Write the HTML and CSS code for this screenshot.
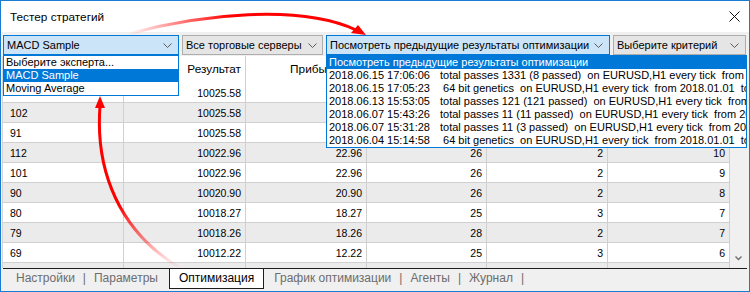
FILE: index.html
```html
<!DOCTYPE html>
<html lang="ru">
<head>
    <meta charset="UTF-8">
    <title>Тестер стратегий</title>
    <link rel="stylesheet" href="styles.css">
</head>
<body>
<div class="window">
    <div class="titlebar">
        <span class="title">Тестер стратегий</span>
        <svg class="close" width="11" height="11" viewBox="0 0 11 11">
            <path d="M0.5 0.5 L10.5 10.5 M10.5 0.5 L0.5 10.5" stroke="#111" stroke-width="1" fill="none"/>
        </svg>
    </div>

    <div class="toolbar">
        <div class="combo active expert">
            <span>MACD Sample</span>
            <svg class="chevron" width="9" height="5" viewBox="0 0 9 5"><path d="M0.5 0.5 L4.5 4.5 L8.5 0.5" stroke="#5a5a5a" fill="none"/></svg>
        </div>
        <div class="combo servers">
            <span>Все торговые серверы</span>
            <svg class="chevron" width="9" height="5" viewBox="0 0 9 5"><path d="M0.5 0.5 L4.5 4.5 L8.5 0.5" stroke="#5a5a5a" fill="none"/></svg>
        </div>
        <div class="combo active history">
            <span>Посмотреть предыдущие результаты оптимизации</span>
            <svg class="chevron" width="9" height="5" viewBox="0 0 9 5"><path d="M0.5 0.5 L4.5 4.5 L8.5 0.5" stroke="#5a5a5a" fill="none"/></svg>
        </div>
        <div class="combo criteria">
            <span>Выберите критерий</span>
            <svg class="chevron" width="9" height="5" viewBox="0 0 9 5"><path d="M0.5 0.5 L4.5 4.5 L8.5 0.5" stroke="#5a5a5a" fill="none"/></svg>
        </div>
    </div>

    <div class="results">
        <div class="grid">
            <!-- cells hidden behind the open lists are left empty -->
            <div class="row header">
                <div class="cell"></div>
                <div class="cell">Результат</div>
                <div class="cell profit">Прибыль</div>
                <div class="cell"></div>
                <div class="cell"></div>
                <div class="cell"></div>
            </div>
            <div class="row">
                <div class="cell"></div><div class="cell">10025.58</div><div class="cell"></div><div class="cell"></div><div class="cell"></div><div class="cell"></div>
            </div>
            <div class="row odd">
                <div class="cell">102</div><div class="cell">10025.58</div><div class="cell"></div><div class="cell"></div><div class="cell"></div><div class="cell"></div>
            </div>
            <div class="row">
                <div class="cell">91</div><div class="cell">10025.58</div><div class="cell"></div><div class="cell"></div><div class="cell"></div><div class="cell"></div>
            </div>
            <div class="row odd">
                <div class="cell">112</div><div class="cell">10022.96</div><div class="cell">22.96</div><div class="cell">26</div><div class="cell">2</div><div class="cell">10</div>
            </div>
            <div class="row">
                <div class="cell">101</div><div class="cell">10022.96</div><div class="cell">22.96</div><div class="cell">26</div><div class="cell">2</div><div class="cell">9</div>
            </div>
            <div class="row odd">
                <div class="cell">90</div><div class="cell">10020.90</div><div class="cell">20.90</div><div class="cell">26</div><div class="cell">2</div><div class="cell">8</div>
            </div>
            <div class="row">
                <div class="cell">80</div><div class="cell">10018.27</div><div class="cell">18.27</div><div class="cell">25</div><div class="cell">3</div><div class="cell">7</div>
            </div>
            <div class="row odd">
                <div class="cell">79</div><div class="cell">10018.26</div><div class="cell">18.26</div><div class="cell">28</div><div class="cell">2</div><div class="cell">7</div>
            </div>
            <div class="row">
                <div class="cell">69</div><div class="cell">10012.22</div><div class="cell">12.22</div><div class="cell">25</div><div class="cell">3</div><div class="cell">6</div>
            </div>
            <div class="row odd">
                <div class="cell"></div><div class="cell"></div><div class="cell"></div><div class="cell"></div><div class="cell"></div><div class="cell"></div>
            </div>
        </div>
        <div class="scrollbar">
            <svg width="7" height="5" viewBox="0 0 7 5"><path d="M0.5 0.5 L3.5 3.5 L6.5 0.5" stroke="#707070" stroke-width="1.4" fill="none"/></svg>
        </div>
    </div>

    <div class="tabs">
        <span class="tab">Настройки</span><span class="sep">|</span>
        <span class="tab">Параметры</span>
        <span class="tab current">Оптимизация</span>
        <span class="tab">График оптимизации</span><span class="sep">|</span>
        <span class="tab">Агенты</span><span class="sep">|</span>
        <span class="tab">Журнал</span><span class="sep">|</span>
    </div>

    <!-- open lists -->
    <ul class="dropdown experts-list">
        <li>Выберите эксперта...</li>
        <li class="selected">MACD Sample</li>
        <li>Moving Average</li>
    </ul>

    <ul class="dropdown history-list">
        <li class="selected">Посмотреть предыдущие результаты оптимизации</li>
        <li><span class="date">2018.06.15 17:06:06</span>total passes 1331 (8 passed)  on EURUSD,H1 every tick  from 2018.01.01  to 2018.06.01</li>
        <li><span class="date">2018.06.15 17:05:23</span> 64 bit genetics  on EURUSD,H1 every tick  from 2018.01.01  to 2018.06.01</li>
        <li><span class="date">2018.06.13 15:53:05</span>total passes 121 (121 passed)  on EURUSD,H1 every tick  from 2018.01.01  to 2018.06.01</li>
        <li><span class="date">2018.06.07 15:43:26</span>total passes 11 (11 passed)  on EURUSD,H1 every tick  from 2018.01.01  to 2018.06.01</li>
        <li><span class="date">2018.06.07 15:31:28</span>total passes 11 (3 passed)  on EURUSD,H1 every tick  from 2018.01.01  to 2018.06.01</li>
        <li><span class="date">2018.06.04 15:14:58</span> 64 bit genetics  on EURUSD,H1 every tick  from 2018.01.01  to 2018.06.01</li>
    </ul>

    <!-- red pointer arrows drawn over the window -->
    <svg class="arrows" width="750" height="292" viewBox="0 0 750 292">
        <defs>
            <linearGradient id="fadeTop" gradientUnits="userSpaceOnUse" x1="128" y1="0" x2="230" y2="0">
                <stop offset="0" stop-color="#ff0000" stop-opacity="0"/>
                <stop offset="1" stop-color="#ff0000" stop-opacity="1"/>
            </linearGradient>
            <linearGradient id="fadeBottom" gradientUnits="userSpaceOnUse" x1="0" y1="268" x2="0" y2="205">
                <stop offset="0" stop-color="#ff0000" stop-opacity="0"/>
                <stop offset="1" stop-color="#ff0000" stop-opacity="1"/>
            </linearGradient>
        </defs>
        <path d="M128 34 C200 14, 300 4, 356 30" stroke="url(#fadeTop)" stroke-width="3" fill="none"/>
        <path d="M366 35 L351 33 L358 25 Z" fill="#ff0000"/>
        <path d="M180 268 C120 232, 95 172, 100 106" stroke="url(#fadeBottom)" stroke-width="3" fill="none"/>
        <path d="M100 96 L95 108 L105 108 Z" fill="#ff0000"/>
    </svg>
</div>
</body>
</html>
```

FILE: styles.css
```css
* {
    box-sizing: border-box;
}

body {
    margin: 0;
    font-family: "Liberation Sans", Arial, sans-serif;
    font-size: 10.5px;
    color: #000;
}

.window {
    position: relative;
    width: 750px;
    height: 292px;
    border: 1px solid #1b7bd0;
    background-color: #f0f0f0;
    display: flex;
    flex-direction: column;
    overflow: hidden;
}

.titlebar {
    flex: none;
    height: 31px;
    background-color: #fff;
    display: flex;
    align-items: center;
    justify-content: space-between;
    padding: 0 9px 0 9px;
}

.title {
    font-size: 11.8px;
}

/* combo boxes row */
.toolbar {
    flex: none;
    display: flex;
    gap: 3px;
    padding: 3px 0 1px 2px;
    font-size: 11px;
}

.combo {
    height: 20px;
    display: flex;
    align-items: center;
    justify-content: space-between;
    padding: 0 6px 0 3px;
    background-color: #e5e5e5;
    border: 1px solid #adadad;
    white-space: nowrap;
}

.combo.active {
    background-color: #cce4f7;
    border-color: #0078d7;
}

.combo.expert { width: 176px; }
.combo.servers { width: 141px; padding-right: 5px; }
.combo.history { width: 284px; }
.combo.criteria { width: 133px; }

/* results table */
.results {
    flex: none;
    height: 212px;
    display: flex;
    padding-left: 1px;
}

.grid {
    width: 728px;
    height: 212px;
    overflow: hidden;
    border-left: 1px solid #d4d4d4;
    background-color: #fff;
}

.row {
    display: grid;
    grid-template-columns: 121px 122px 121px 120px 121px 122px;
    height: 20px;
}

.row.odd {
    background-color: #ebebeb;
}

.row .cell {
    border-right: 1px solid #d0d0d0;
    border-bottom: 1px solid #d0d0d0;
    text-align: right;
    padding: 0 4px;
    line-height: 20px;
    white-space: nowrap;
    overflow: hidden;
}

.row .cell:first-child {
    text-align: left;
    padding-left: 7px;
}

.row.header {
    height: 27px;
    font-size: 11.8px;
}

.row.header .cell {
    border-bottom: none;
    line-height: 27px;
}

.row.header .profit {
    padding-right: 26px;
}

.scrollbar {
    width: 17px;
    height: 212px;
    background-color: #f0f0f0;
    display: flex;
    align-items: flex-end;
    justify-content: center;
    padding-bottom: 7px;
}

/* bottom tabs */
.tabs {
    flex: none;
    height: 23px;
    margin: 0 2px;
    border-top: 1px solid #1e1e1e;
    display: flex;
    align-items: flex-start;
    padding-left: 13px;
    color: #6d6d6d;
    font-size: 12px;
}

.tab {
    line-height: 19px;
    white-space: nowrap;
}

.sep {
    line-height: 19px;
    margin: 0 8px;
}

.tab.current {
    color: #000;
    background-color: #fff;
    border: 1px solid #1e1e1e;
    border-top: none;
    height: 20px;
    margin: 0 10px 0 11px;
    padding: 0 9px;
}

/* open drop-down lists */
.dropdown {
    position: absolute;
    top: 54px;
    margin: 0;
    padding: 0;
    list-style: none;
    background-color: #fff;
    border: 1px solid #0078d7;
    overflow: hidden;
    font-size: 11px;
}

.dropdown li {
    height: 13px;
    line-height: 13px;
    padding-left: 2px;
    white-space: pre;
}

.dropdown li.selected {
    background-color: #0078d7;
    color: #fff;
}

.experts-list {
    left: 2px;
    width: 176px;
}

.history-list {
    left: 325px;
    width: 421px;
}

.history-list .date {
    display: inline-block;
    width: 111px;
}

.arrows {
    position: absolute;
    top: -1px;
    left: -1px;
    pointer-events: none;
}
```
